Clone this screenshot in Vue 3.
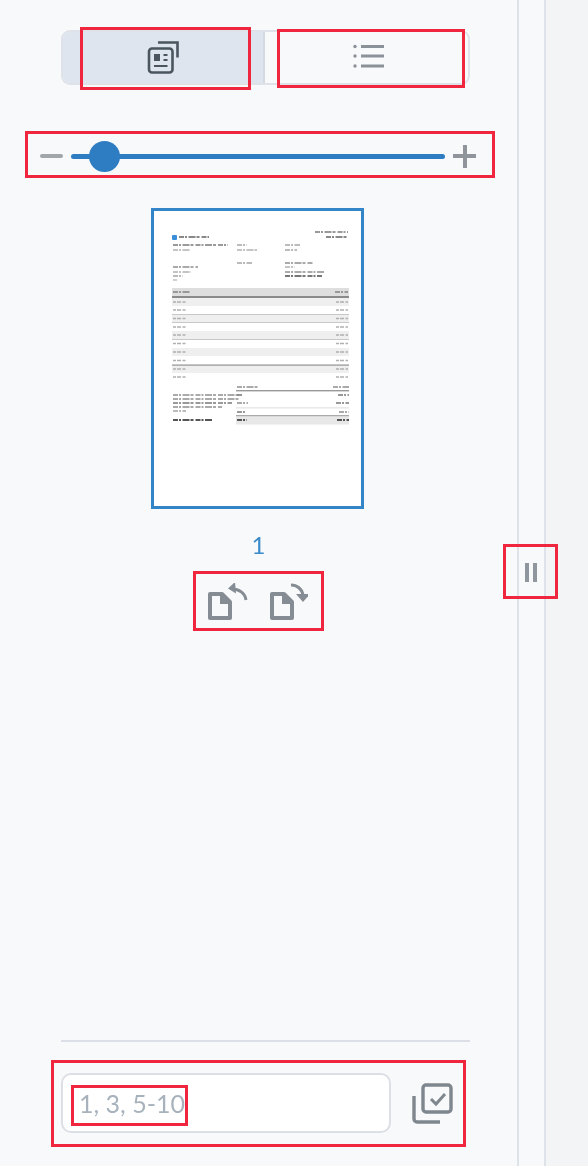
<script setup>
const rowsY = [302, 310, 318.5, 327, 335, 343.5, 352, 360.5, 369, 377]
const shaded = [298, 315, 331, 348, 365]
const rules = [314, 322, 339, 364.5]
const textLines = [
  [173, 228, 245, '#9a9a9a'], [173, 190, 250, '#c4c4c4'], [237, 247, 245, '#bbb'], [237, 257, 250, '#c4c4c4'],
  [285, 300, 245, '#bbb'], [285, 297, 250, '#bbb'], [237, 252, 263, '#bbb'], [285, 313, 263, '#aaa'],
  [285, 295, 267, '#c4c4c4'], [285, 325, 272, '#aaa'], [285, 322, 276, '#777'], [173, 198, 267, '#aaa'],
  [173, 191, 272, '#c4c4c4'], [173, 183, 276, '#bbb'], [173, 177, 280, '#ccc'], [179, 209, 237, '#888'],
  [315, 348, 232, '#999'], [326, 348, 237, '#888'], [173, 190, 292, '#999'], [335, 348, 292, '#999'],
  [237, 258, 387, '#aaa'], [333, 349, 387, '#aaa'], [173, 240, 395, '#aaa'], [173, 240, 399, '#aaa'],
  [173, 232, 403, '#999'], [173, 222, 407, '#aaa'], [173, 186, 411, '#bbb'], [237, 242, 395, '#888'],
  [338, 349, 395, '#999'], [237, 248, 403, '#aaa'], [336, 349, 403, '#999'], [237, 246, 412, '#999'],
  [339, 349, 412, '#aaa'], [237, 247, 420, '#555'], [337, 349, 420, '#555'], [173, 213, 420, '#555']
]
</script>

<template>
  <div class="page">
    <aside class="panel">
      <div class="seg">
        <button class="seg-btn active" aria-label="Thumbnail view">
          <svg width="34" height="34" viewBox="146 40 34 34" fill="none" stroke="#4b5560" stroke-width="2.6">
            <rect x="149" y="47.5" width="23.5" height="24" rx="3" />
            <path d="M158 41.5h19.5v15" />
            <rect x="154" y="53" width="6" height="7" fill="#4b5560" stroke="none" />
            <path d="M163.5 54h4M163.5 59h4M154 65h13.5" stroke-width="2" />
          </svg>
        </button>
        <button class="seg-btn" aria-label="List view">
          <svg class="list-icon" width="34" height="26" viewBox="351 43 34 26" fill="none" stroke="#8b9198" stroke-width="3">
            <path d="M360 46.5h23M360 56h23M360 66h23" />
            <circle cx="354" cy="46.5" r="1.7" fill="#8b9198" stroke="none" />
            <circle cx="354" cy="56" r="1.7" fill="#8b9198" stroke="none" />
            <circle cx="354" cy="66" r="1.7" fill="#8b9198" stroke="none" />
          </svg>
        </button>
      </div>

      <div class="zoom">
        <span class="minus"></span>
        <div class="track"><span class="thumb"></span></div>
        <span class="plus"></span>
      </div>

      <div class="page-card">
        <svg class="doc" width="207" height="295" viewBox="154 211 207 295">
          <defs>
            <filter id="soft" x="-5%" y="-5%" width="110%" height="110%"><feGaussianBlur stdDeviation="0.75" /></filter>
          </defs>
          <g filter="url(#soft)">
            <rect x="172" y="235" width="5" height="5" rx="1" fill="#3b8fd8" />
            <rect x="172" y="288" width="177" height="8" fill="#dedede" />
            <rect x="172" y="296" width="177" height="2.6" fill="#8a8a8a" />
            <rect v-for="y in shaded" :key="y" x="172" :y="y" width="177" height="8" fill="#efefef" />
            <rect v-for="y in rules" :key="y" x="172" :y="y" width="177" height="1" fill="#c8c8c8" />
            <rect x="172" y="364.5" width="177" height="1.4" fill="#aaa" />
            <rect x="236" y="390" width="113" height="1.4" fill="#999" />
            <rect x="236" y="407.5" width="113" height="0.8" fill="#d5d5d5" />
            <rect x="236" y="415" width="113" height="1.6" fill="#aaa" />
            <rect x="236" y="416.5" width="113" height="8" fill="#e8e8e8" />
            <line v-for="l in textLines" :key="l.join()" :x1="l[0]" :x2="l[1]" :y1="l[2]" :y2="l[2]" :stroke="l[3]" stroke-width="1.8" stroke-dasharray="5 1 2 1.5 7 1 3 2" />
            <g v-for="y in rowsY" :key="y" stroke="#b0b0b0" stroke-width="1.5" stroke-dasharray="3 1 4 1.5">
              <line x1="173" x2="186" :y1="y" :y2="y" />
              <line x1="336" x2="348" :y1="y" :y2="y" />
            </g>
          </g>
        </svg>
      </div>

      <div class="page-num">1</div>

      <div class="rotate">
        <svg width="44" height="40" viewBox="206 580 44 40" fill="none" stroke="#858c94" stroke-width="4" aria-label="Rotate left">
          <path d="M210 591h12l8 8v16h-20z" stroke-linejoin="round" />
          <path d="M220 590l11 11h-11z" fill="#858c94" stroke="none" />
          <path d="M246 597c-1-7-7-11-14-11" stroke-width="3" />
          <path d="M235 579l-7 6.5 8 5z" fill="#858c94" stroke="none" />
        </svg>
        <svg width="40" height="40" viewBox="268 580 40 40" fill="none" stroke="#858c94" stroke-width="4" aria-label="Rotate right">
          <path d="M272 591h12l8 8v16h-20z" stroke-linejoin="round" />
          <path d="M282 590l11 11h-11z" fill="#858c94" stroke="none" />
          <path d="M291 582c6 0 11 4 12 10" stroke-width="3" />
          <path d="M296 591h14l-7 8z" fill="#858c94" stroke="none" />
        </svg>
      </div>

      <div class="spacer"></div>

      <div class="footer">
        <input class="pages" type="text" placeholder="1, 3, 5-10" />
        <svg class="select-all" width="42" height="42" viewBox="411 1082 42 42" fill="none" stroke="#7e868e" stroke-width="3.4" aria-label="Select pages">
          <rect x="423" y="1085" width="28" height="27" rx="3" />
          <path d="M431 1099l5 5 9-10" stroke-width="3" />
          <path d="M414 1096v23a3 3 0 0 0 3 3h23" />
        </svg>
      </div>
    </aside>

    <div class="gutter">
      <span class="pause"></span>
    </div>
    <div class="rest"></div>

    <span class="mark mark-a"></span>
    <span class="mark mark-b"></span>
    <span class="mark mark-c"></span>
    <span class="mark mark-d"></span>
    <span class="mark mark-e"></span>
    <span class="mark mark-f"></span>
    <span class="mark mark-g"></span>
  </div>
</template>

<style scoped>
.page {
  position: relative;
  display: flex;
  width: 588px;
  height: 1166px;
  overflow: hidden;
  background: #f3f4f6;
  font-family: Lato, "Liberation Sans", sans-serif;
  filter: blur(0.45px);
}
.panel {
  box-sizing: border-box;
  width: 519px;
  height: 100%;
  display: flex;
  flex-direction: column;
  padding: 30px 48px 0 61px;
  background: #f8f9fb;
  border-right: 2px solid #dee2e9;
}
.seg {
  display: flex;
  width: 409px;
  height: 55px;
  flex: none;
  box-sizing: border-box;
  border: 2px solid #dfe3e9;
  border-radius: 9px;
  overflow: hidden;
}
.seg-btn {
  flex: 1;
  display: flex;
  align-items: center;
  justify-content: center;
  padding: 0;
  border: 0;
  background: transparent;
}
.seg-btn.active {
  flex: none;
  width: 202px;
  background: #dee5ee;
  border-right: 2px solid #d5dae2;
}
.list-icon {
  margin: -3px 0 0 4px;
}
.zoom {
  display: flex;
  align-items: center;
  flex: none;
  height: 32px;
  margin: 55px -7px 0 -21px;
}
.minus {
  width: 23px;
  height: 4px;
  flex: none;
  border-radius: 2px;
  background: #a1a6ab;
}
.track {
  position: relative;
  flex: 1;
  height: 5px;
  margin: 0 8px;
  border-radius: 3px;
  background: #2e7dc2;
}
.thumb {
  position: absolute;
  left: 18px;
  top: -13px;
  width: 31px;
  height: 31px;
  border-radius: 50%;
  background: #2e7dc2;
}
.plus {
  position: relative;
  width: 23px;
  height: 23px;
  flex: none;
  background:
    linear-gradient(#8f959b, #8f959b) center / 100% 4px no-repeat,
    linear-gradient(#8f959b, #8f959b) center / 4px 100% no-repeat;
}
.page-card {
  box-sizing: border-box;
  width: 213px;
  height: 301px;
  flex: none;
  margin: 36px 0 0 90px;
  border: 3px solid #3484c8;
  background: #fff;
}
.doc {
  display: block;
}
.page-num {
  flex: none;
  width: 213px;
  margin: 21px 0 0 91px;
  text-align: center;
  font-size: 24px;
  line-height: 30px;
  color: #3a8ac9;
}
.rotate {
  display: flex;
  flex: none;
  gap: 18px;
  margin: 23px 0 0 145px;
  height: 40px;
}
.spacer {
  flex: 1;
}
.footer {
  display: flex;
  align-items: flex-start;
  flex: none;
  box-sizing: border-box;
  width: 409px;
  height: 126px;
  padding-top: 31px;
  border-top: 2px solid #dcdfe5;
}
.pages {
  box-sizing: border-box;
  width: 330px;
  height: 60px;
  padding: 0 16px;
  border: 2px solid #dcdfe5;
  border-radius: 10px;
  background: #fff;
  font-family: Lato, "Liberation Sans", sans-serif;
  font-size: 25px;
  outline: none;
}
.pages::placeholder {
  color: #a8b2bc;
  opacity: 1;
}
.select-all {
  margin: 9px 0 0 20px;
  flex: none;
}
.gutter {
  position: relative;
  box-sizing: border-box;
  width: 27px;
  height: 100%;
  background: #f8f9fb;
  border-right: 2px solid #dee2e9;
}
.pause {
  position: absolute;
  left: 6px;
  top: 563px;
  width: 12px;
  height: 19px;
  background:
    linear-gradient(#8f969d, #8f969d) left / 4px 100% no-repeat,
    linear-gradient(#8f969d, #8f969d) right / 4px 100% no-repeat;
}
.rest {
  flex: 1;
}
.mark {
  position: absolute;
  box-sizing: border-box;
  border: 3px solid #f0263f;
}
.mark-a { left: 80px; top: 27px; width: 171px; height: 63px; }
.mark-b { left: 277px; top: 29px; width: 188px; height: 59px; }
.mark-c { left: 25px; top: 131px; width: 470px; height: 47px; }
.mark-d { left: 193px; top: 571px; width: 131px; height: 60px; }
.mark-e { left: 503px; top: 544px; width: 55px; height: 55px; }
.mark-f { left: 51px; top: 1060px; width: 415px; height: 87px; }
.mark-g { left: 71px; top: 1085px; width: 117px; height: 41px; }
</style>
